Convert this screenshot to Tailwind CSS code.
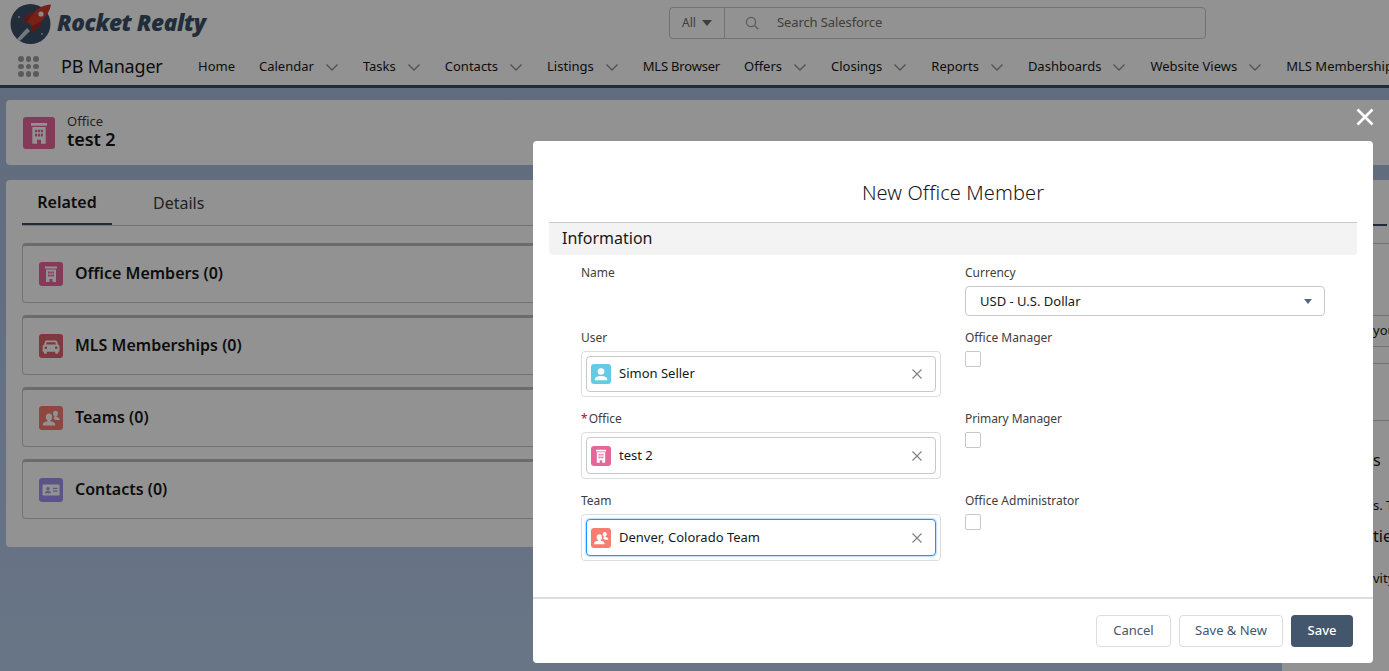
<!DOCTYPE html>
<html lang="en">
<head>
  <meta charset="UTF-8" />
  <title>New Office Member</title>
  <script src="https://cdn.jsdelivr.net/npm/@tailwindcss/browser@4"></script>
</head>
<body class="relative h-[671px] w-[1389px] overflow-hidden bg-linear-to-b from-[#a6bbda] to-[#b6cdea] font-['Noto_Sans',sans-serif] text-[13px] text-[#181818]">

<svg class="hidden">
  <symbol id="i-office" viewBox="0 0 24 24"><path fill="#fff" d="M6 4.500h12v2H6zM7 7.500h10V20h-3.500v-3h-3v3H7zM9 9.500v2h1.600v-2zm2.200 0v2h1.600v-2zm2.200 0v2H15v-2zM9 12.600v2h1.600v-2zm2.200 0v2h1.600v-2zm2.200 0v2H15v-2z" fill-rule="evenodd"/></symbol>
  <symbol id="i-car" viewBox="0 0 24 24"><path fill="#fff" fill-rule="evenodd" d="M7.600 6.500h8.800c.8 0 1.400.5 1.700 1.200l1 3c.8.4 1.400 1.200 1.400 2.100V17c0 .4-.3.7-.7.7h-.6V19c0 .4-.3.7-.7.7h-1.600c-.4 0-.7-.3-.7-.7v-1.300H7.900V19c0 .4-.3.7-.7.7H5.600c-.4 0-.7-.3-.7-.7v-1.300h-.6c-.4 0-.7-.3-.7-.7v-4.200c0-.9.6-1.700 1.400-2.100l1-3c.3-.7.9-1.200 1.600-1.200zM7.800 8.300l-.8 2.300h10l-.8-2.300zM6.800 12.400a1.300 1.300 0 100 2.600 1.300 1.300 0 000-2.600zm10.400 0a1.300 1.300 0 100 2.600 1.300 1.300 0 000-2.600z"/></symbol>
  <symbol id="i-team" viewBox="0 0 24 24"><g fill="#fff"><ellipse cx="10" cy="11" rx="3.200" ry="3.600"/><path d="M8.500 14h3v1.300c2.400.5 4.700 1.300 4.700 3V19.500H3.800v-1.200c0-1.700 2.300-2.500 4.700-3z"/><ellipse cx="16.500" cy="7.500" rx="2.400" ry="2.800"/><path d="M15.500 10h2v.9c1.700.3 3.200 1 3.200 2.300v.8h-4.200c-.6-.6-1.300-1-2-1.300.5-.6.8-1.300 1-2z"/></g></symbol>
  <symbol id="i-contact" viewBox="0 0 24 24"><path fill="#fff" fill-rule="evenodd" d="M4.500 6.500h15c.6 0 1 .4 1 1v9c0 .6-.4 1-1 1h-15c-.6 0-1-.4-1-1v-9c0-.6.4-1 1-1zM9 9a1.700 1.700 0 100 3.400A1.700 1.700 0 009 9zm-3 6.300h6c0-1.300-1.300-2.200-3-2.200s-3 .9-3 2.200zM14 9.700v1.300h4.500V9.700zm0 2.800v1.300h4.500v-1.300z"/></symbol>
  <symbol id="i-user" viewBox="0 0 24 24"><g fill="#fff"><circle cx="12" cy="9" r="4"/><path d="M4.500 19c0-3 3-4.500 7.500-4.500s7.500 1.500 7.500 4.500v.5h-15z"/></g></symbol>
  <symbol id="i-chev" viewBox="0 0 14 14"><path d="M1.500 4.500 7 10l5.500-5.500" fill="none" stroke="#8f8f8f" stroke-width="1.300"/></symbol>
  <symbol id="i-x" viewBox="0 0 12 12"><path d="M1.500 1.500l9 9M10.500 1.500l-9 9" stroke="#808080" stroke-width="1.100" fill="none"/></symbol>
</svg>

<!-- global header -->
<header class="flex h-[46px] items-center bg-white">
  <div class="flex w-[669px] items-center pl-[10px]">
    <svg class="h-[42px] w-[42px]" viewBox="0 0 42 42">
      <circle cx="20.500" cy="22" r="20" fill="#3b4f68"/>
      <path d="M7 37 17 26l3 3-10 10z" fill="#fff" opacity=".75"/>
      <path d="M41 2.500c-7 .5-13 3-17 8l-7 9 6 6 9-7c4.500-4.500 8-10 9-16z" fill="#d1392b"/>
      <path d="M18 12l6-2-6 9-6 1zM32 19l-2 6-9 6 1-7z" fill="#a62c20"/>
      <circle cx="31" cy="12" r="2.600" fill="#f1f1f1"/>
      <circle cx="9" cy="15" r=".8" fill="#fff"/><circle cx="32" cy="32" r=".8" fill="#fff"/>
    </svg>
    <span class="ml-[5px] text-[22.500px] leading-none font-extrabold italic tracking-[-0.4px] font-['Open_Sans',sans-serif] text-[#3b4f68]">Rocket Realty</span>
  </div>
  <div class="flex h-[32px] w-[537px] items-center rounded-[4px] border border-[#c9c9c9] text-[#706e6b]">
    <div class="flex h-full w-[55px] items-center gap-[6px] border-r border-[#c9c9c9] pl-[12px] text-[12px]">
      All
      <svg class="h-[6px] w-[10px]" viewBox="0 0 10 6"><path d="M0 0h10L5 6z" fill="#706e6b"/></svg>
    </div>
    <svg class="ml-[20px] h-[14px] w-[14px]" viewBox="0 0 14 14"><circle cx="6" cy="6" r="4.600" fill="none" stroke="#a0a0a0" stroke-width="1.300"/><path d="M9.500 9.500l3.800 3.800" stroke="#a0a0a0" stroke-width="1.300"/></svg>
    <span class="ml-[18px] tracking-[-0.1px]">Search Salesforce</span>
  </div>
</header>

<!-- app nav -->
<nav class="flex h-[42px] items-center overflow-hidden whitespace-nowrap border-b-[3px] border-[#3a4d68] bg-white pt-[2px]">
  <div class="ml-[18px] grid w-[21px] shrink-0 grid-cols-3 gap-[2px]">
    <i class="h-[5.500px] w-[5.500px] rounded-full bg-[#a0a0a0]"></i><i class="h-[5.500px] w-[5.500px] rounded-full bg-[#a0a0a0]"></i><i class="h-[5.500px] w-[5.500px] rounded-full bg-[#a0a0a0]"></i>
    <i class="h-[5.500px] w-[5.500px] rounded-full bg-[#a0a0a0]"></i><i class="h-[5.500px] w-[5.500px] rounded-full bg-[#a0a0a0]"></i><i class="h-[5.500px] w-[5.500px] rounded-full bg-[#a0a0a0]"></i>
    <i class="h-[5.500px] w-[5.500px] rounded-full bg-[#a0a0a0]"></i><i class="h-[5.500px] w-[5.500px] rounded-full bg-[#a0a0a0]"></i><i class="h-[5.500px] w-[5.500px] rounded-full bg-[#a0a0a0]"></i>
  </div>
  <span class="ml-[22px] w-[137px] shrink-0 text-[18px] tracking-[-0.2px]">PB Manager</span>
  <div class="flex items-center gap-[24px]">
    <span>Home</span>
    <span class="flex items-center gap-[11px]">Calendar <svg class="h-[14px] w-[14px]"><use href="#i-chev"/></svg></span>
    <span class="flex items-center gap-[11px]">Tasks <svg class="h-[14px] w-[14px]"><use href="#i-chev"/></svg></span>
    <span class="flex items-center gap-[11px]">Contacts <svg class="h-[14px] w-[14px]"><use href="#i-chev"/></svg></span>
    <span class="flex items-center gap-[11px]">Listings <svg class="h-[14px] w-[14px]"><use href="#i-chev"/></svg></span>
    <span class="tracking-[-0.2px]">MLS Browser</span>
    <span class="flex items-center gap-[11px]">Offers <svg class="h-[14px] w-[14px]"><use href="#i-chev"/></svg></span>
    <span class="flex items-center gap-[11px]">Closings <svg class="h-[14px] w-[14px]"><use href="#i-chev"/></svg></span>
    <span class="flex items-center gap-[11px]">Reports <svg class="h-[14px] w-[14px]"><use href="#i-chev"/></svg></span>
    <span class="flex items-center gap-[11px]">Dashboards <svg class="h-[14px] w-[14px]"><use href="#i-chev"/></svg></span>
    <span class="flex items-center gap-[11px]">Website Views <svg class="h-[14px] w-[14px]"><use href="#i-chev"/></svg></span>
    <span>MLS Memberships</span>
  </div>
</nav>

<!-- record header -->
<section class="ml-[6px] mt-[12px] flex h-[65px] items-center gap-[12px] rounded-l-[4px] bg-white pl-[17px]">
  <div class="flex h-[32px] w-[32px] items-center justify-center rounded-[3px] bg-[#e6669a]"><svg class="h-[32px] w-[32px]"><use href="#i-office"/></svg></div>
  <div class="mb-[4px]">
    <div class="text-[13px] leading-[16px] text-[#3e3e3c]">Office</div>
    <div class="text-[18px] leading-[20px] font-semibold tracking-[-0.1px]">test 2</div>
  </div>
</section>

<div class="mt-[15px] flex items-start gap-[12px] pl-[6px]">
  <!-- related list column -->
  <section class="h-[367px] w-[1264px] shrink-0 rounded-[4px] bg-white px-[16px]">
    <div class="flex h-[46px] border-b border-[#c9c9c9] text-[16px]">
      <span class="flex w-[90px] items-center justify-center border-b-[2px] border-[#3a4d68] font-semibold">Related</span>
      <span class="ml-[41px] flex items-center text-[#3e3e3c]">Details</span>
    </div>
    <div class="mt-[17px] flex flex-col gap-[12px]">
      <div class="flex h-[60px] items-center gap-[12px] rounded-[4px] border border-t-[3px] border-[#c9c9c9] border-t-[#bbb] pl-[16px] text-[16px] font-semibold"><div class="h-[24px] w-[24px] rounded-[3px] bg-[#e6669a]"><svg class="h-[24px] w-[24px]"><use href="#i-office"/></svg></div><span class="mb-[2px]">Office Members (0)</span></div>
      <div class="flex h-[60px] items-center gap-[12px] rounded-[4px] border border-t-[3px] border-[#c9c9c9] border-t-[#bbb] pl-[16px] text-[16px] font-semibold"><div class="h-[24px] w-[24px] rounded-[3px] bg-[#e0616b]"><svg class="h-[24px] w-[24px]"><use href="#i-car"/></svg></div><span class="mb-[2px]">MLS Memberships (0)</span></div>
      <div class="flex h-[60px] items-center gap-[12px] rounded-[4px] border border-t-[3px] border-[#c9c9c9] border-t-[#bbb] pl-[16px] text-[16px] font-semibold"><div class="h-[24px] w-[24px] rounded-[3px] bg-[#f87c70]"><svg class="h-[24px] w-[24px]"><use href="#i-team"/></svg></div><span class="mb-[2px]">Teams (0)</span></div>
      <div class="flex h-[60px] items-center gap-[12px] rounded-[4px] border border-t-[3px] border-[#c9c9c9] border-t-[#bbb] pl-[16px] text-[16px] font-semibold"><div class="h-[24px] w-[24px] rounded-[3px] bg-[#a094ed]"><svg class="h-[24px] w-[24px]"><use href="#i-contact"/></svg></div><span class="mb-[2px]">Contacts (0)</span></div>
    </div>
  </section>

  <!-- activity column, mostly behind the modal -->
  <section class="h-[500px] flex-1 overflow-hidden whitespace-nowrap bg-white pl-[91px]">
    <div class="h-[46px] w-[14px] border-b-[2px] border-[#3a4d68]"></div>
    <div class="h-[17px]"></div>
    <div class="h-[72px] border-t border-[#c9c9c9]"></div>
    <div class="flex h-[31px] items-center border-t border-[#c9c9c9]">you</div>
    <div class="h-[17px] border-t border-[#c9c9c9]"></div>
    <div class="h-[57px] border-t border-[#c9c9c9]"></div>
    <div class="h-[42px] border-t border-[#c9c9c9] pt-[27px] text-[16px] leading-[24px]">s</div>
    <div class="mt-[31px] h-[24px] leading-[24px]">s. T</div>
    <div class="mt-[7px] h-[24px] text-[16px] leading-[24px]">tie</div>
    <div class="mt-[18px] h-[24px] leading-[24px]">vity</div>
  </section>
</div>

<!-- dim layer -->
<div class="absolute inset-0 z-10 bg-black/[0.427]"></div>

<svg class="absolute left-[1356px] top-[108px] z-20 h-[18px] w-[18px]" viewBox="0 0 18 18"><path d="M1.500 1.500l15 15M16.500 1.500l-15 15" stroke="#fff" stroke-width="2.600" fill="none"/></svg>

<!-- modal -->
<div class="absolute left-[533px] top-[141px] z-20 flex h-[522px] w-[840px] flex-col rounded-[4px] bg-white">
  <h2 class="flex h-[81px] shrink-0 items-center justify-center pt-[23px] text-[20px] font-light tracking-[0.1px]">New Office Member</h2>
  <div class="mx-[16px] flex h-[33px] shrink-0 items-center rounded-b-[4px] border-t border-[#c9c9c9] bg-[#f3f3f3] pb-[3px] pl-[13px] text-[16px]">Information</div>

  <div class="mt-[8px] grid flex-1 grid-cols-[360px_360px] grid-rows-[65px_81px_82px_1fr] gap-x-[24px] pl-[48px] text-[#181818]">
    <div class="text-[12px] leading-[20px] text-[#3e3e3c]">Name</div>
    <div>
      <div class="text-[12px] leading-[20px] text-[#3e3e3c]">Currency</div>
      <div class="mt-[3px] flex h-[30px] items-center justify-between rounded-[4px] border border-[#c9c9c9] pl-[14px] pr-[12px] pt-[1px]">USD - U.S. Dollar
        <svg class="h-[5px] w-[8px]" viewBox="0 0 8 5"><path d="M0 0h8L4 5z" fill="#51678a"/></svg>
      </div>
    </div>

    <div>
      <div class="text-[12px] leading-[20px] text-[#3e3e3c]">User</div>
      <div class="mt-[3px] h-[46px] rounded-[4px] border border-[#ddd] p-[4px]">
        <div class="flex h-[36px] items-center rounded-[4px] border border-[#c9c9c9] pl-[4px] pr-[12px]">
          <div class="h-[20px] w-[20px] rounded-[3px] bg-[#65cae4]"><svg class="h-[20px] w-[20px]"><use href="#i-user"/></svg></div>
          <span class="ml-[8px] flex-1">Simon Seller</span>
          <svg class="h-[12px] w-[12px]"><use href="#i-x"/></svg>
        </div>
      </div>
    </div>
    <div>
      <div class="text-[12px] leading-[20px] text-[#3e3e3c]">Office Manager</div>
      <div class="mt-[3px] h-[16px] w-[16px] rounded-[2px] border border-[#c9c9c9]"></div>
    </div>

    <div>
      <div class="text-[12px] leading-[20px] text-[#3e3e3c]"><span class="mr-[1px] text-[#ba0517]">*</span>Office</div>
      <div class="mt-[3px] h-[47px] rounded-[4px] border border-[#ddd] p-[4px]">
        <div class="flex h-[37px] items-center rounded-[4px] border border-[#c9c9c9] pl-[4px] pr-[12px]">
          <div class="h-[20px] w-[20px] rounded-[3px] bg-[#e6669a]"><svg class="h-[20px] w-[20px]"><use href="#i-office"/></svg></div>
          <span class="ml-[8px] flex-1">test 2</span>
          <svg class="h-[12px] w-[12px]"><use href="#i-x"/></svg>
        </div>
      </div>
    </div>
    <div>
      <div class="text-[12px] leading-[20px] tracking-[-0.1px] text-[#3e3e3c]">Primary Manager</div>
      <div class="mt-[3px] h-[16px] w-[16px] rounded-[2px] border border-[#c9c9c9]"></div>
    </div>

    <div>
      <div class="text-[12px] leading-[20px] text-[#3e3e3c]">Team</div>
      <div class="mt-[3px] h-[47px] rounded-[4px] border border-[#ddd] p-[4px]">
        <div class="flex h-[37px] items-center rounded-[4px] border border-[#1b96ff] pl-[4px] pr-[12px] shadow-[0_0_2px_#1b96ff]">
          <div class="h-[20px] w-[20px] rounded-[3px] bg-[#f87c70]"><svg class="h-[20px] w-[20px]"><use href="#i-team"/></svg></div>
          <span class="ml-[8px] flex-1">Denver, Colorado Team</span>
          <svg class="h-[12px] w-[12px]"><use href="#i-x"/></svg>
        </div>
      </div>
    </div>
    <div>
      <div class="text-[12px] leading-[20px] text-[#3e3e3c]">Office Administrator</div>
      <div class="mt-[3px] h-[16px] w-[16px] rounded-[2px] border border-[#c9c9c9]"></div>
    </div>
  </div>

  <footer class="flex h-[66px] shrink-0 items-center justify-end gap-[8px] border-t-[2px] border-[#ddd] pr-[20px]">
    <button class="h-[32px] w-[75px] rounded-[4px] border border-[#ddd] text-[#44566c]">Cancel</button>
    <button class="h-[32px] w-[104px] rounded-[4px] border border-[#ddd] text-[#44566c]">Save &amp; New</button>
    <button class="h-[32px] w-[62px] rounded-[4px] bg-[#44566c] font-medium text-white">Save</button>
  </footer>
</div>

</body>
</html>
